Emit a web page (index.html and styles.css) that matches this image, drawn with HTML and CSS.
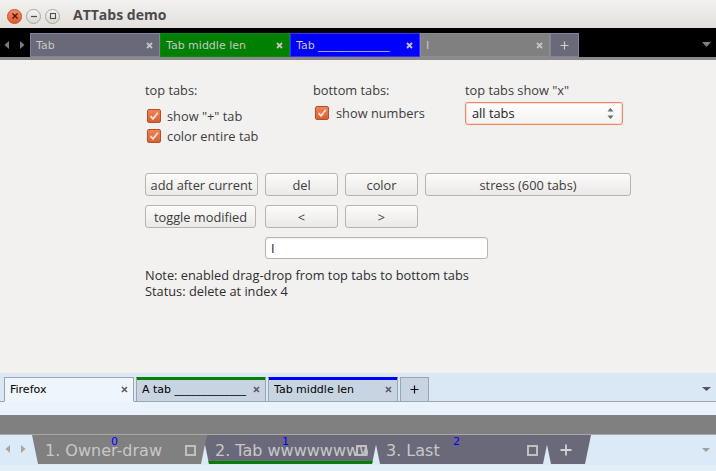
FILE: index.html
```html
<!DOCTYPE html>
<html lang="en">
<head>
<meta charset="utf-8">
<title>ATTabs demo</title>
<link rel="stylesheet" href="styles.css">
</head>
<body>
<div class="window">
  <header class="titlebar">
    <div class="wbtns">
      <span class="wbtn wclose"><svg width="8" height="8" viewBox="0 0 8 8"><path d="M1.5 1.5L6.5 6.5M6.5 1.5L1.5 6.5" stroke="#3b1a0e" stroke-width="1.4"/></svg></span>
      <span class="wbtn"><svg width="8" height="8" viewBox="0 0 8 8"><path d="M1 4.5H7" stroke="#4d4d4d" stroke-width="1.2"/></svg></span>
      <span class="wbtn"><svg width="8" height="8" viewBox="0 0 8 8"><rect x="1.5" y="1.5" width="5" height="5" fill="none" stroke="#4d4d4d" stroke-width="1.1"/></svg></span>
    </div>
    <div class="title">ATTabs demo</div>
  </header>

  <nav class="toptabs">
    <svg class="scroll" width="30" height="24" viewBox="0 0 30 24"><path d="M9 8L4.5 12L9 16Z M20 8L24.5 12L20 16Z" fill="#7c7c7c"/></svg>
    <div class="tt t-gray"><span class="tt-label">Tab</span><svg class="tt-x" width="7" height="7" viewBox="0 0 7 7"><path d="M1 1L6 6M6 1L1 6" stroke="#c4c4c4" stroke-width="1.8"/></svg></div>
    <div class="tt t-green"><span class="tt-label">Tab middle len</span><svg class="tt-x" width="7" height="7" viewBox="0 0 7 7"><path d="M1 1L6 6M6 1L1 6" stroke="#c4c4c4" stroke-width="1.8"/></svg></div>
    <div class="tt t-blue"><span class="tt-label">Tab _____________</span><svg class="tt-x" width="7" height="7" viewBox="0 0 7 7"><path d="M1 1L6 6M6 1L1 6" stroke="#c4c4c4" stroke-width="1.8"/></svg></div>
    <div class="tt t-mid"><span class="tt-label">I</span><svg class="tt-x" width="7" height="7" viewBox="0 0 7 7"><path d="M1 1L6 6M6 1L1 6" stroke="#c4c4c4" stroke-width="1.8"/></svg></div>
    <div class="tt t-gray t-plus"><svg width="9" height="9" viewBox="0 0 9 9"><path d="M4.5 0.5V8.5M0.5 4.5H8.5" stroke="#d0d0d0" stroke-width="1.2"/></svg></div>
    <svg class="menu" width="9" height="5" viewBox="0 0 9 5"><path d="M0 0H9L4.5 5Z" fill="#808080"/></svg>
  </nav>

  <main class="main">
    <section class="opts">
      <div class="col">
        <div class="lbl">top tabs:</div>
        <label class="chk chk-a"><span class="box"><svg width="12" height="12" viewBox="0 0 12 12"><path d="M2.5 6.2L5 8.8L9.8 2.8" fill="none" stroke="#f7e3d8" stroke-width="1.8"/></svg></span>show "+" tab</label>
        <label class="chk"><span class="box"><svg width="12" height="12" viewBox="0 0 12 12"><path d="M2.5 6.2L5 8.8L9.8 2.8" fill="none" stroke="#f7e3d8" stroke-width="1.8"/></svg></span>color entire tab</label>
      </div>
      <div class="col">
        <div class="lbl">bottom tabs:</div>
        <label class="chk chk-b"><span class="box"><svg width="12" height="12" viewBox="0 0 12 12"><path d="M2.5 6.2L5 8.8L9.8 2.8" fill="none" stroke="#f7e3d8" stroke-width="1.8"/></svg></span>show numbers</label>
      </div>
      <div class="col">
        <div class="lbl">top tabs show "x"</div>
        <div class="select"><span>all tabs</span><svg width="7" height="13" viewBox="0 0 7 13"><path d="M3.5 1L6.5 4.5H0.5Z M3.5 12L6.5 8.5H0.5Z" fill="#6a6a6a"/></svg></div>
      </div>
    </section>

    <section class="btns">
      <button class="btn">add after current</button>
      <button class="btn">del</button>
      <button class="btn">color</button>
      <button class="btn">stress (600 tabs)</button>
      <button class="btn btn-narrow">toggle modified</button>
      <button class="btn">&lt;</button>
      <button class="btn">&gt;</button>
      <div class="field">I</div>
    </section>

    <p class="note">Note: enabled drag-drop from top tabs to bottom tabs<br>Status: delete at index 4</p>
  </main>

  <div class="midtabs">
    <div class="mstrip">
      <div class="mt mt-active"><span class="mt-label">Firefox</span><svg class="mt-x" width="7" height="7" viewBox="0 0 7 7"><path d="M1 1L6 6M6 1L1 6" stroke="#5a5a5a" stroke-width="1.6"/></svg></div>
      <div class="mt mt-green"><span class="mt-label">A tab _____________</span><svg class="mt-x" width="7" height="7" viewBox="0 0 7 7"><path d="M1 1L6 6M6 1L1 6" stroke="#5a5a5a" stroke-width="1.6"/></svg></div>
      <div class="mt mt-blue"><span class="mt-label">Tab middle len</span><svg class="mt-x" width="7" height="7" viewBox="0 0 7 7"><path d="M1 1L6 6M6 1L1 6" stroke="#5a5a5a" stroke-width="1.6"/></svg></div>
      <div class="mt mt-plus"><svg width="9" height="9" viewBox="0 0 9 9"><path d="M4.5 0.5V8.5M0.5 4.5H8.5" stroke="#111" stroke-width="1.2"/></svg></div>
      <svg class="menu" width="9" height="4" viewBox="0 0 9 4"><path d="M0 0H9L4.5 4Z" fill="#555"/></svg>
    </div>
  </div>

  <div class="odtabs">
    <div class="odband"></div>
    <div class="odstrip">
      <svg class="scroll2" width="32" height="29" viewBox="0 0 32 29"><path d="M10 10L5.5 14L10 18Z M21 10L25.5 14L21 18Z" fill="#a6a6a6"/></svg>
      <div class="ot ot-active"><span class="ot-label">1. Owner-draw</span><span class="ot-num">0</span><span class="ot-sq"></span></div>
      <div class="ot ot-mod"><span class="ot-label">2. Tab wwwwwwwwwwww</span><span class="ot-num">1</span><span class="ot-sq"></span></div>
      <div class="ot"><span class="ot-label">3. Last</span><span class="ot-num">2</span><span class="ot-sq"></span></div>
      <div class="ot ot-plus"><svg width="12" height="12" viewBox="0 0 12 12"><path d="M6 0.5V11.5M0.5 6H11.5" stroke="#d2d2d2" stroke-width="1.8"/></svg></div>
      <svg class="menu" width="8" height="4" viewBox="0 0 8 4"><path d="M0 0H8L4 4Z" fill="#a0a0a0"/></svg>
    </div>
  </div>
</div>
</body>
</html>
```

FILE: styles.css
```css
* { box-sizing: border-box; }
html, body { margin: 0; padding: 0; }
body {
  width: 716px;
  height: 471px;
  overflow: hidden;
  background: #f2f1f0;
  font-family: "Open Sans", "Noto Sans", sans-serif;
  font-size: 12.8px;
  color: #3c3c3c;
}
.window { display: flex; flex-direction: column; height: 471px; }

/* title bar */
.titlebar {
  flex: none;
  height: 28px;
  display: flex;
  align-items: center;
  background: linear-gradient(#f2f1ef, #e3e0db);
}
.wbtns { display: flex; gap: 4px; padding-left: 7px; margin-top: 4px; }
.wbtn {
  width: 15px; height: 15px; border-radius: 50%;
  display: flex; align-items: center; justify-content: center;
  background: linear-gradient(#f7f6f5, #d9d6d1);
  border: 1px solid #aaa69f;
}
.wclose { background: linear-gradient(#f89069, #e2572b); border-color: #c24a22; }
.title {
  margin-left: 13px;
  margin-top: 1px;
  font-weight: 700;
  font-size: 14px;
  color: #4b4b4b;
}

/* top tabs */
.toptabs {
  flex: none;
  height: 32px;
  background: #000;
  border-bottom: 3px solid #8a8a8a;
  padding-top: 5px;
  display: flex;
  align-items: flex-end;
}
.scroll { flex: none; }
.tt {
  flex: none;
  width: 130px;
  height: 24px;
  display: flex;
  align-items: center;
  padding: 0 6px 0 5px;
  border: 1px solid;
  font-family: "DejaVu Sans", sans-serif;
  font-size: 11px;
  color: #c8c8c8;
  white-space: nowrap;
  overflow: hidden;
}
.tt-label { flex: 1; overflow: hidden; }
.tt-x { flex: none; margin-left: 4px; }
.t-gray { background: #6a6979; border-color: #82819f; }
.t-green { background: #008000; border-color: #0a8a0a; }
.t-blue { background: #0000ff; border-color: #3232ff; }
.t-mid { background: #808080; border-color: #8e8e8e; }
.t-plus { width: 29px; justify-content: center; padding: 0; }
.toptabs .menu { margin: 0 5px 10px auto; }

/* main area */
.main {
  flex: none;
  height: 313px;
  padding: 22px 0 0 145px;
  display: flex;
  flex-direction: column;
}
.opts {
  display: grid;
  grid-template-columns: 168px 152px 160px;
}
.col { display: flex; flex-direction: column; align-items: flex-start; }
.lbl { line-height: 17px; height: 17px; color: #3c3c3c; }
.chk {
  display: flex;
  align-items: center;
  height: 20px;
  gap: 6px;
  padding-left: 2px;
  color: #3c3c3c;
}
.chk-a { margin-top: 7px; }
.chk-b { margin-top: 4px; gap: 7px; }
.box {
  width: 14px; height: 14px;
  border-radius: 2px;
  border: 1px solid #b3502a;
  background: linear-gradient(#f08457, #d9602f);
  display: flex; align-items: center; justify-content: center;
}
.select {
  margin-top: 2.5px;
  width: 158px;
  height: 23px;
  border: 1px solid #ec8660;
  border-radius: 3px;
  background: linear-gradient(#ffffff, #f3f2f1);
  box-shadow: inset 0 0 0 1px rgba(240, 150, 110, 0.25);
  display: flex;
  align-items: center;
  justify-content: space-between;
  padding: 0 8px 0 6px;
  color: #222;
}

.btns {
  margin-top: 27px;
  display: grid;
  grid-template-columns: 113px 73px 73px 206px;
  grid-auto-rows: 23px;
  column-gap: 7px;
  row-gap: 9px;
}
.btn {
  height: 23px;
  margin: 0;
  padding: 0;
  font: inherit;
  color: #3c3c3c;
  border: 1px solid #b8b4ae;
  border-radius: 3px;
  background: linear-gradient(#fbfbfa, #ebe9e7);
  box-shadow: inset 0 1px 0 rgba(255,255,255,0.8);
}
.btn-narrow { width: 111px; }
.field {
  grid-column: 2 / 5;
  width: 223px;
  height: 22px;
  border: 1px solid #b8b4ae;
  border-radius: 3px;
  background: #fff;
  box-shadow: inset 0 1px 1px rgba(0,0,0,0.06);
  display: flex;
  align-items: center;
  padding-left: 5px;
  color: #222;
}
.note {
  margin: 7px 0 0;
  line-height: 16px;
  color: #2d2d2d;
}

/* middle tabs */
.midtabs {
  flex: none;
  height: 42px;
  background: #eaf3fb;
}
.mstrip {
  height: 29px;
  background: #dae8f6;
  border-bottom: 1px solid #9aa5b1;
  padding-left: 4px;
  display: flex;
  align-items: flex-end;
  gap: 2px;
}
.mt {
  flex: none;
  width: 130px;
  height: 25px;
  margin-bottom: -1px;
  display: flex;
  align-items: center;
  padding: 0 5px 1px 5px;
  border: 1px solid #9aa5b1;
  background: #c8d4e1;
  font-family: "DejaVu Sans", sans-serif;
  font-size: 11px;
  color: #000;
  white-space: nowrap;
  overflow: hidden;
}
.mt-active { background: #eef5fc; border-bottom-color: #eef5fc; }
.mt-green { border-top-color: #008000; box-shadow: inset 0 2px 0 #008000; }
.mt-blue { border-top-color: #0000ff; box-shadow: inset 0 2px 0 #0000ff; }
.mt-label { flex: 1; overflow: hidden; }
.mt-x { flex: none; margin-left: 4px; }
.mt-plus { width: 29px; justify-content: center; padding: 0; }
.mstrip .menu { margin: 0 5px 10px auto; }

/* owner-draw tabs */
.odtabs {
  flex: none;
  height: 56px;
  background: #e3eef9;
}
.odband {
  height: 20px;
  background: #808080;
  border-bottom: 1px solid #a9a9a9;
}
.odstrip {
  height: 30px;
  background: #dce9f6;
  display: flex;
  align-items: flex-start;
}
.scroll2 { flex: none; }
.ot {
  position: relative;
  flex: none;
  width: 175px;
  height: 29px;
  margin-left: -4px;
  background: #6a6979;
  clip-path: polygon(0 0, 100% 0, calc(100% - 6px) 100%, 6px 100%);
  display: flex;
  align-items: center;
  padding: 0 10px 0 12px;
  font-family: "DejaVu Sans", sans-serif;
  font-size: 16px;
  color: #c8c8c8;
  white-space: nowrap;
  overflow: hidden;
}
.ot-active { background: #808080; margin-left: 0; z-index: 1; padding-left: 13px; }
.ot-label { padding-top: 1px; flex: 1; min-width: 0; overflow: hidden; }
.ot-num {
  position: absolute;
  left: 79px;
  top: 1px;
  font-size: 11px;
  line-height: 11px;
  color: #0000ff;
}
.ot-sq {
  position: absolute;
  right: 11px;
  top: 10px;
  width: 11px;
  height: 11px;
  border: 2px solid #c0c0c0;
}
.ot-mod::after {
  content: "";
  position: absolute;
  left: 0; right: 0; bottom: 0;
  height: 3px;
  background: #008000;
}
.ot-plus { width: 46px; padding: 0 0 0 15px; }
.odstrip .menu { margin: 13px 6px 0 auto; }
```
